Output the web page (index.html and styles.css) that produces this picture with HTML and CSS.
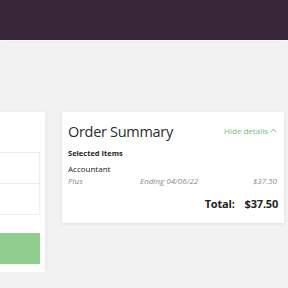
FILE: index.html
```html
<!DOCTYPE html>
<html lang="en">
  <head>
    <meta charset="UTF-8" />
    <title>Checkout</title>
    <link rel="stylesheet" href="styles.css">
  </head>
  <body>
    <div class="top-bar"></div>
    <div class="checkout">
      <div class="card pay-card">
        <div class="field"></div>
        <div class="field"></div>
        <div class="pay-button"></div>
      </div>
      <div class="card summary-card">
        <div class="summary-head">
          <h2 class="summary-title">Order Summary</h2>
          <span class="toggle">Hide details
            <svg width="7" height="5" viewBox="0 0 7 5"><path d="M0.6 4.2 L3.5 1.2 L6.4 4.2" fill="none" stroke="#6cbf6c" stroke-width="1"/></svg>
          </span>
        </div>
        <div class="items-label">Selected Items</div>
        <div class="item-name">Accountant</div>
        <div class="item-row">
          <span class="plan">Plus</span>
          <span class="ending">Ending 04/06/22</span>
          <span class="price">$37.50</span>
        </div>
        <div class="total-row">
          <span>Total:</span>
          <span>$37.50</span>
        </div>
      </div>
    </div>
  </body>
</html>
```

FILE: styles.css
```css
html,
body {
  margin: 0;
  padding: 0;
}
body {
  background: #f2f2f2;
  font-family: "Open Sans", "Noto Sans", sans-serif;
  color: #222;
  overflow: hidden;
}
.top-bar {
  height: 40px;
  background: #372739;
  border-bottom: 1px solid #f9f7f9;
  box-shadow: 0 6px 0 -5px #f1e8ec;
}
.checkout {
  display: flex;
  align-items: flex-start;
  gap: 17px;
  margin-left: -200px;
  padding-top: 71px;
}
.card {
  background: #fff;
  box-shadow: 0 1px 4px rgba(0, 0, 0, 0.08);
}
/* left card, mostly cut off */
.pay-card {
  flex: none;
  width: 240px;
  padding: 40px 5px 8px 0;
}
.field {
  height: 30px;
  border: 1px solid #eeeeee;
  margin-bottom: -1px;
}
.field + .field {
  margin-bottom: 18px;
}
.pay-button {
  height: 31px;
  background: #8fce8f;
}
/* order summary */
.summary-card {
  flex: none;
  width: 210px;
  padding: 10px 6px 12px 6px;
}
.summary-head {
  display: flex;
  justify-content: space-between;
  align-items: center;
  padding-right: 1px;
}
.summary-title {
  margin: 0;
  font-size: 14.5px;
  font-weight: 400;
  letter-spacing: -0.3px;
  color: #2b2b2b;
}
.toggle {
  font-size: 8px;
  color: #6cbf6c;
  display: flex;
  align-items: center;
  gap: 2px;
  margin-top: -3px;
}
.items-label {
  margin-top: 7px;
  font-size: 7.5px;
  font-weight: 700;
}
.item-name {
  margin-top: 5px;
  font-size: 8px;
}
.item-row {
  display: grid;
  grid-template-columns: 72px 1fr auto;
  margin-top: 1px;
  padding-right: 1px;
  font-size: 8px;
  font-style: italic;
  color: #8a8a8a;
}
.total-row {
  display: flex;
  justify-content: flex-end;
  gap: 10px;
  margin-top: 10px;
  font-size: 11px;
  font-weight: 700;
  letter-spacing: -0.2px;
}
```
